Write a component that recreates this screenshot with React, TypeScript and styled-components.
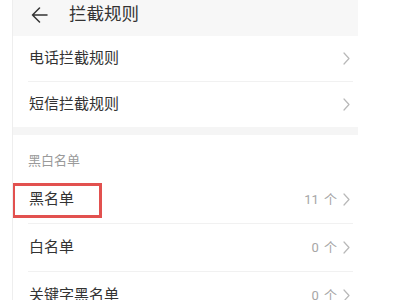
import React from "react";
import styled, { createGlobalStyle } from "styled-components";

const Global = createGlobalStyle`
  html, body { margin: 0; padding: 0; background: #ffffff; }
  body { font-family: Roboto, "Noto Sans CJK SC", sans-serif; color: #333; }
  * { box-sizing: border-box; }
`;

const Panel = styled.div`
  margin-left: 12px;
  width: 346px;
  height: 300px;
  overflow: hidden;
  border-left: 1px solid #eeeeee;
  background: #ffffff;
`;

const Header = styled.div`
  height: 36px;
  background: #f7f7f7;
  display: flex;
  align-items: center;
  padding: 0 0 6px 18px;
`;

const Title = styled.div`
  margin-left: 21px;
  font-size: 17.5px;
  color: #333;
  line-height: 1;
`;

const Row = styled.div<{ $h: number }>`
  position: relative;
  height: ${(p) => p.$h}px;
  display: flex;
  align-items: center;
  padding: 0 8px 0 16px;
`;

const Label = styled.div`
  flex: 1;
  font-size: 15px;
  color: #333;
  line-height: 1;
`;

const Count = styled.span`
  font-size: 13px;
  color: #a6a6a6;
  margin-right: 6px;
  line-height: 1;
  word-spacing: 2px;
`;

const Divider = styled.div`
  height: 1px;
  background: #f1f1f1;
  margin: 0 5px 0 15px;
`;

const Band = styled.div`
  height: 8px;
  background: #f5f5f5;
`;

const SectionTitle = styled.div`
  height: 40px;
  padding: 19px 0 0 15px;
  font-size: 13px;
  color: #9a9a9a;
  line-height: 1;
`;

const Highlight = styled.div`
  position: absolute;
  left: -1px;
  top: 8px;
  width: 90px;
  height: 35px;
  border: 3px solid #e2514f;
  pointer-events: none;
`;

const BackArrow = () => (
  <svg width="17" height="16" viewBox="0 0 17 16" fill="none">
    <path d="M16 8H1.5M8.5 1L1.5 8l7 7" stroke="#333" strokeWidth="1.5" strokeLinecap="round" strokeLinejoin="round" />
  </svg>
);

const Chevron = () => (
  <svg width="7" height="13" viewBox="0 0 7 13" fill="none">
    <path d="M1 1l5 5.5L1 12" stroke="#b8b8b8" strokeWidth="1.2" strokeLinecap="round" strokeLinejoin="round" />
  </svg>
);

export default function App() {
  return (
    <>
      <Global />
      <Panel>
        <Header>
          <BackArrow />
          <Title>拦截规则</Title>
        </Header>
        <Row $h={45}>
          <Label>电话拦截规则</Label>
          <Chevron />
        </Row>
        <Divider />
        <Row $h={45}>
          <Label>短信拦截规则</Label>
          <Chevron />
        </Row>
        <Band />
        <SectionTitle>黑白名单</SectionTitle>
        <Row $h={48}>
          <Label>黑名单</Label>
          <Count>11 个</Count>
          <Chevron />
          <Highlight />
        </Row>
        <Divider />
        <Row $h={47}>
          <Label>白名单</Label>
          <Count>0 个</Count>
          <Chevron />
        </Row>
        <Divider />
        <Row $h={47}>
          <Label>关键字黑名单</Label>
          <Count>0 个</Count>
          <Chevron />
        </Row>
      </Panel>
    </>
  );
}
